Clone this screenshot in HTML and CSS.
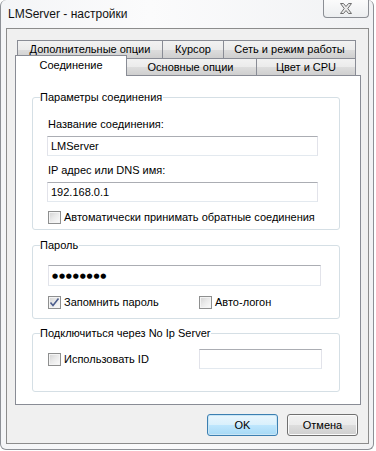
FILE: index.html
```html
<!DOCTYPE html>
<html>
<head>
<meta charset="utf-8">
<link rel="stylesheet" href="styles.css">
</head>
<body>
<div class="window">
  <div class="titlebar">
    <span class="title">LMServer - настройки</span>
    <div class="close">
      <svg width="14" height="11" viewBox="0 0 14 11">
        <path d="M1.5 0.5 H4.5 L7 3.5 L9.5 0.5 H12.5 L8.8 5.5 L12.5 10.5 H9.5 L7 7.5 L4.5 10.5 H1.5 L5.2 5.5 Z" fill="#e9e9e9" stroke="#6f6f6f" stroke-width="1" stroke-linejoin="round"/>
      </svg>
    </div>
  </div>
  <div class="client">
    <div class="tabctl">
      <div class="tabrow row1">
        <div class="tab back t11">Дополнительные опции</div>
        <div class="tab back t12">Курсор</div>
        <div class="tab back t13">Сеть и режим работы</div>
      </div>
      <div class="tabrow row2">
        <div class="tab selected t21">Соединение</div>
        <div class="tab front t22">Основные опции</div>
        <div class="tab front t23">Цвет и CPU</div>
      </div>
      <div class="panel">
        <div class="group g1">
          <div class="gtitle">Параметры соединения</div>
          <div class="label l1">Название соединения:</div>
          <input class="edit e1" type="text" value="LMServer">
          <div class="label l2">IP адрес или DNS имя:</div>
          <input class="edit e1" type="text" value="192.168.0.1">
          <div class="check c1"><span class="box"></span><span>Автоматически принимать обратные соединения</span></div>
        </div>
        <div class="group g2">
          <div class="gtitle">Пароль</div>
          <div class="edit e2"><span class="dots">●●●●●●●●</span></div>
          <div class="grid2 r2">
            <div class="check"><span class="box checked"><svg width="11" height="11" viewBox="0 0 11 11"><path d="M1.5 5.5 L4 8.5 L9.5 1.5" fill="none" stroke="#4c5d8c" stroke-width="1.6"/></svg></span><span>Запомнить пароль</span></div>
            <div class="check"><span class="box"></span><span>Авто-логон</span></div>
          </div>
        </div>
        <div class="group g3">
          <div class="gtitle">Подключиться через No Ip Server</div>
          <div class="grid2 r3">
            <div class="check"><span class="box"></span><span>Использовать ID</span></div>
            <input class="edit e3" type="text" value="">
          </div>
        </div>
      </div>
    </div>
    <div class="buttons">
      <div class="btn ok">OK</div>
      <div class="btn cancel">Отмена</div>
    </div>
  </div>
</div>
</body>
</html>
```
FILE: styles.css
```css
html, body {
  margin: 0;
  padding: 0;
  background: #ffffff;
}
body {
  font-family: "Liberation Sans", Arial, sans-serif;
  font-size: 11px;
  color: #000;
}
.window {
  box-sizing: border-box;
  width: 374px;
  height: 450px;
  border: 1px solid #8d9096;
  border-top: none;
  border-radius: 6px;
  background: linear-gradient(90deg, #f4f5f7 0%, #fbfbfc 40%, #f1f2f4 100%);
  display: flex;
  flex-direction: column;
}
.titlebar {
  height: 28px;
  display: flex;
  align-items: flex-start;
  justify-content: space-between;
}
.title {
  margin-left: 7px;
  font-size: 12px;
  line-height: 29px;
  color: #111;
}
.close {
  box-sizing: border-box;
  width: 46px;
  height: 18px;
  margin-right: 4px;
  border: 1px solid #8b8e94;
  border-top: none;
  border-radius: 0 0 4px 4px;
  background: linear-gradient(#fbfbfb, #eceef0);
  display: flex;
  align-items: center;
  justify-content: center;
}
.client {
  box-sizing: border-box;
  width: 363px;
  height: 416px;
  margin-left: 5px;
  border: 1px solid #8c8c8c;
  background: #f0f0f0;
  display: flex;
  flex-direction: column;
}
.tabctl {
  margin: 11px 0 0 8px;
  width: 346px;
  display: flex;
  flex-direction: column;
}
.tabrow {
  display: flex;
  align-items: flex-start;
  padding-left: 2px;
}
.row1 { height: 18px; }
.row2 { height: 17px; z-index: 2; }
.tab {
  box-sizing: border-box;
  border: 1px solid #898c95;
  border-bottom: none;
  text-align: center;
  white-space: nowrap;
}
.back, .front {
  background: linear-gradient(#f2f2f2 0%, #ebebeb 50%, #dddddd 51%, #cfcfcf 100%);
}
.back { height: 18px; line-height: 17px; }
.front { height: 17px; line-height: 16px; }
.t11 { width: 146px; }
.t12 { width: 62px; margin-left: -1px; }
.t13 { width: 133px; margin-left: -1px; }
.selected {
  width: 112px;
  height: 21px;
  margin-left: -2px;
  margin-top: -3px;
  line-height: 19px;
  background: #ffffff;
  z-index: 3;
}
.t22 { width: 133px; margin-left: -3px; }
.t23 { width: 100px; margin-left: -1px; }
.panel {
  box-sizing: border-box;
  border: 1px solid #898c95;
  background: #ffffff;
  padding: 21px 20px 12px 16px;
  display: flex;
  flex-direction: column;
}
.group {
  border: 1px solid #d5dfe5;
  border-radius: 3px;
  padding-left: 15px;
  display: flex;
  flex-direction: column;
  align-items: flex-start;
}
.gtitle {
  margin: -7px 0 0 -8px;
  padding: 0 1px 0 0;
  line-height: 13px;
  background: #ffffff;
}
.label {
  line-height: 13px;
}
.l1 { margin-top: 14px; }
.l2 { margin-top: 8px; }
.edit {
  box-sizing: border-box;
  height: 20px;
  margin: 5px 0 0 -1px;
  padding: 0 0 0 3px;
  border: 1px solid #e2e3ea;
  border-top-color: #abadb3;
  border-bottom-color: #e3e9ef;
  background: #fff;
  font-family: "Liberation Sans", Arial, sans-serif;
  font-size: 11px;
  color: #000;
  outline: none;
}
.e1 { width: 271px; }
.c1 { margin-top: 9px; }
.g1 { padding-bottom: 5px; }
.check {
  display: flex;
  align-items: center;
  gap: 3px;
  line-height: 13px;
}
.box {
  box-sizing: border-box;
  width: 13px;
  height: 13px;
  border: 1px solid #8e8f8f;
  background: linear-gradient(135deg, #d2d2d2 0%, #ebebeb 50%, #fbfbfb 100%);
  box-shadow: inset 0 0 0 1px #f4f4f4;
  display: flex;
  align-items: center;
  justify-content: center;
}
.g2 { margin-top: 15px; padding-bottom: 9px; }
.e2 {
  width: 273px;
  height: 21px;
  margin: 13px 0 0 0;
  display: flex;
  align-items: center;
}
.dots {
  font-family: "DejaVu Sans", sans-serif;
  font-size: 7px;
  letter-spacing: 0.8px;
}
.grid2 {
  display: grid;
  grid-template-columns: 151px auto;
  align-items: center;
}
.r2 { margin-top: 10px; }
.g3 { margin-top: 14px; padding-bottom: 22px; }
.r3 { margin-top: 9px; }
.e3 { width: 123px; margin: 0; }
.buttons {
  display: flex;
  justify-content: flex-end;
  gap: 9px;
  margin-top: 9px;
  padding-right: 10px;
}
.btn {
  box-sizing: border-box;
  width: 71px;
  height: 22px;
  border-radius: 3px;
  text-align: center;
  line-height: 20px;
}
.ok {
  border: 1px solid #3c7fb1;
  background: linear-gradient(#eaf6fd 0%, #d9f0fc 50%, #bee6fd 51%, #a7d9f5 100%);
  box-shadow: inset 0 0 0 1px #c9e6f6;
}
.cancel {
  border: 1px solid #707070;
  background: linear-gradient(#f2f2f2 0%, #ebebeb 50%, #dddddd 51%, #cfcfcf 100%);
  box-shadow: inset 0 0 0 1px #fbfbfb;
}
```
